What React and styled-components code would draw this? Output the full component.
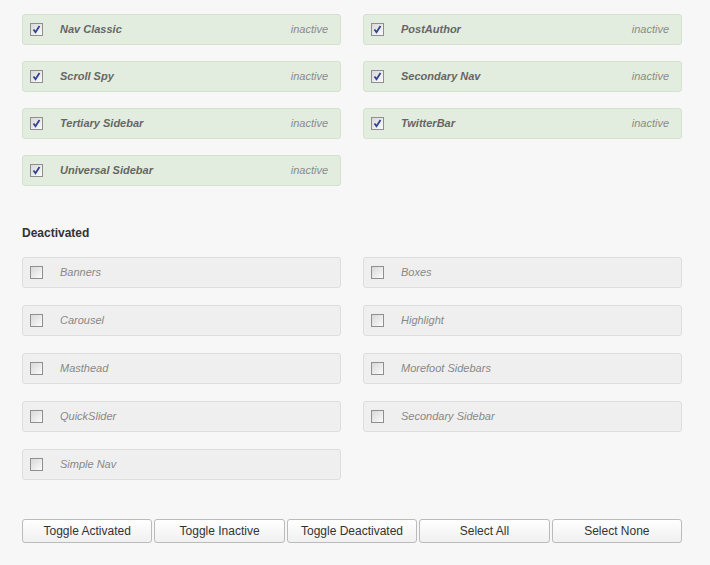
import React from 'react';
import styled, { createGlobalStyle } from 'styled-components';

const GlobalStyle = createGlobalStyle`
    html, body {
        margin: 0;
        padding: 0;
        background: #f7f7f7;
        font-family: "Liberation Sans", Arial, sans-serif;
    }
`;

const Page = styled.div`
    width: 660px;
    padding: 14px 22px 0 22px;
`;

const Grid = styled.div`
    display: grid;
    grid-template-columns: 319px 319px;
    column-gap: 22px;
    row-gap: ${props => props.rowGap}px;
`;

const Item = styled.label`
    display: flex;
    align-items: center;
    box-sizing: border-box;
    height: 31px;
    padding: 0 12px 1px 7px;
    border: 1px solid ${props => props.active ? '#d3e2cd' : '#dddddd'};
    border-radius: 3px;
    background: ${props => props.active ? '#e3eddf' : '#efefef'};
    font-size: 11px;
`;

const Box = styled.span`
    box-sizing: border-box;
    width: 13px;
    height: 13px;
    margin-right: 17px;
    border: 1px solid #8f8f8f;
    background: linear-gradient(135deg, #d8d8d8, #fbfbfb);
    display: flex;
    align-items: center;
    justify-content: center;
`;

const Name = styled.span`
    font-style: italic;
    font-weight: ${props => props.active ? 'bold' : 'normal'};
    color: ${props => props.active ? '#666666' : '#888888'};
    margin-right: auto;
`;

const Status = styled.span`
    font-style: italic;
    color: #8a8a8a;
`;

const Heading = styled.h3`
    margin: 40px 0 17px 0;
    font-size: 12px;
    font-weight: bold;
    color: #333333;
    line-height: 14px;
`;

const ButtonRow = styled.div`
    display: flex;
    gap: 2px;
    margin-top: 39px;
`;

const Button = styled.button`
    flex: 1;
    height: 24px;
    border: 1px solid #bbbbbb;
    border-radius: 3px;
    background: linear-gradient(#ffffff, #f0f0f0);
    font-family: "Liberation Sans", Arial, sans-serif;
    font-size: 12px;
    color: #333333;
    padding: 0;
`;

function CheckBox({checked}) {
    return (
        <Box>
            {checked && (
                <svg width="9" height="9" viewBox="0 0 9 9">
                    <path d="M1.5 4.5 L3.5 7.2 L7.5 1" fill="none" stroke="#2f4190" strokeWidth="1.8" />
                </svg>
            )}
        </Box>
    );
}

const activeItems = [
    'Nav Classic', 'PostAuthor',
    'Scroll Spy', 'Secondary Nav',
    'Tertiary Sidebar', 'TwitterBar',
    'Universal Sidebar'
];

const deactivatedItems = [
    'Banners', 'Boxes',
    'Carousel', 'Highlight',
    'Masthead', 'Morefoot Sidebars',
    'QuickSlider', 'Secondary Sidebar',
    'Simple Nav'
];

const buttons = ['Toggle Activated', 'Toggle Inactive', 'Toggle Deactivated', 'Select All', 'Select None'];

export default function App() {
    return (
        <Page>
            <GlobalStyle />
            <Grid rowGap={16}>
                {activeItems.map(name =>
                    <Item active key={name}>
                        <CheckBox checked />
                        <Name active>{name}</Name>
                        <Status>inactive</Status>
                    </Item>
                )}
            </Grid>
            <Heading>Deactivated</Heading>
            <Grid rowGap={17}>
                {deactivatedItems.map(name =>
                    <Item key={name}>
                        <CheckBox />
                        <Name>{name}</Name>
                    </Item>
                )}
            </Grid>
            <ButtonRow>
                {buttons.map(label => <Button key={label}>{label}</Button>)}
            </ButtonRow>
        </Page>
    );
};
